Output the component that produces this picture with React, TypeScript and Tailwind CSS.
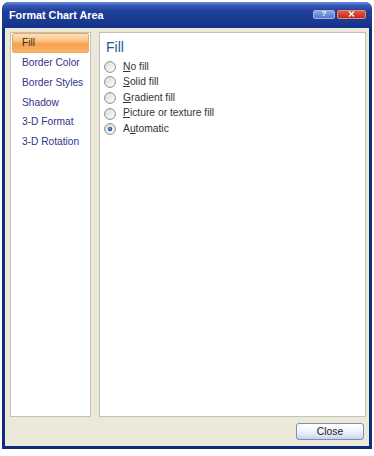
import React from "react";

const font = { fontFamily: '"Liberation Sans", Arial, sans-serif' };

const tabs = ["Fill", "Border Color", "Border Styles", "Shadow", "3-D Format", "3-D Rotation"];

function Radio({ checked }: { checked?: boolean }) {
  return (
    <svg width="12" height="12" viewBox="0 0 12 12" className="shrink-0">
      <defs>
        <linearGradient id="rg" x1="0" y1="0" x2="1" y2="1">
          <stop offset="0" stopColor="#dcdcd6" />
          <stop offset="1" stopColor="#ffffff" />
        </linearGradient>
        <radialGradient id="dot" cx="0.4" cy="0.4" r="0.6">
          <stop offset="0" stopColor="#6f9be0" />
          <stop offset="1" stopColor="#1d4a9e" />
        </radialGradient>
      </defs>
      <circle cx="6" cy="6" r="5.4" fill="url(#rg)" stroke="#8c8c8c" strokeWidth="1" />
      {checked && <circle cx="6" cy="6" r="2.3" fill="url(#dot)" />}
    </svg>
  );
}

function Option({ pre, u, post, checked }: { pre?: string; u: string; post: string; checked?: boolean }) {
  return (
    <div className="flex h-[15.6px] items-center gap-[7px]">
      <Radio checked={checked} />
      <span className="text-[10.3px] leading-none text-[#333333]">
        {pre}
        <span className="underline underline-offset-1">{u}</span>
        {post}
      </span>
    </div>
  );
}

export default function App() {
  return (
    <div className="h-[456px] w-[374px] bg-white pl-[2px] pt-[2px]" style={font}>
      <div className="flex h-[447px] w-[370px] flex-col rounded-t-[7px] bg-[#0f2c80] px-[3px] pb-[3px]">
        {/* title bar */}
        <div className="-mx-[3px] flex h-[26px] items-center justify-between rounded-t-[7px] bg-[linear-gradient(#6d8fe0_0%,#3a5cb8_12%,#1f3f98_35%,#1a3991_75%,#13308a_100%)] pl-[7px] pr-[6px]">
          <span className="text-[10.8px] font-bold text-white">Format Chart Area</span>
          <div className="flex items-center gap-[2px] pb-[2px]">
            <div className="flex h-[9px] w-[22px] items-center justify-center rounded-[2px] border border-[#9db3ea] bg-[linear-gradient(#8aa6e6,#5678c8)] text-[8px] font-bold leading-none text-white">
              ?
            </div>
            <div className="flex h-[9px] w-[29px] items-center justify-center rounded-[2px] border border-[#e88b7c] bg-[linear-gradient(#e35a45,#c02c1c)]">
              <svg width="7" height="6" viewBox="0 0 7 6">
                <path d="M1 0.5 L6 5.5 M6 0.5 L1 5.5" stroke="white" strokeWidth="1.4" />
              </svg>
            </div>
          </div>
        </div>
        {/* body */}
        <div className="flex flex-1 flex-col bg-[#ece9d8] pl-[5px] pr-[3px] pt-[4px]">
          <div className="flex h-[385px] gap-[8px]">
            <div className="w-[81px] border border-[#c0c0bc] bg-white px-[1px]">
              {tabs.map((t, i) => (
                <div
                  key={t}
                  className={
                    i === 0
                      ? "flex h-[20px] items-center rounded-[2px] border border-[#e9a863] bg-[linear-gradient(#fee3ba_0%,#fac27f_40%,#f6a04a_55%,#f8b56c_100%)] pl-[9px] text-[10.2px] text-[#3b2a1a]"
                      : "flex h-[19.7px] items-center pl-[10px] text-[10.2px] text-[#33338a]"
                  }
                >
                  {t}
                </div>
              ))}
            </div>
            <div className="flex-1 border border-[#c0c0bc] bg-white pl-[4px] pt-[5px]">
              <div className="mb-[3px] pl-[2px] text-[14px] leading-[18px] text-[#1f5a93]">Fill</div>
              <Option u="N" post="o fill" />
              <Option u="S" post="olid fill" />
              <Option u="G" post="radient fill" />
              <Option u="P" post="icture or texture fill" />
              <Option pre="A" u="u" post="tomatic" checked />
            </div>
          </div>
          <div className="mt-[6px] flex justify-end pr-[2px]">
            <button className="flex h-[17px] w-[68px] items-center justify-center rounded-[3px] border border-[#7b8fb8] bg-[linear-gradient(#ffffff_0%,#f3f5fb_45%,#dfe5f6_75%,#c5d0ee_100%)] text-[10.3px] text-[#1a1a1a]">
              Close
            </button>
          </div>
        </div>
      </div>
    </div>
  );
}
